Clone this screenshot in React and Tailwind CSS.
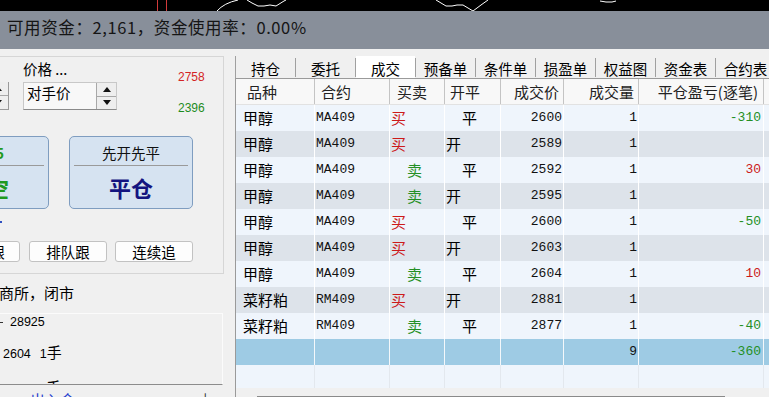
import React from "react";

const RED = "text-[#cc1a1a]";
const GREEN = "text-[#248f24]";

const rows = [
  ["甲醇", "MA409", "买", "平", "2600", "1", "-310"],
  ["甲醇", "MA409", "买", "开", "2589", "1", ""],
  ["甲醇", "MA409", "卖", "平", "2592", "1", "30"],
  ["甲醇", "MA409", "卖", "开", "2595", "1", ""],
  ["甲醇", "MA409", "买", "平", "2600", "1", "-50"],
  ["甲醇", "MA409", "买", "开", "2603", "1", ""],
  ["甲醇", "MA409", "卖", "平", "2604", "1", "10"],
  ["菜籽粕", "RM409", "买", "开", "2881", "1", ""],
  ["菜籽粕", "RM409", "卖", "平", "2877", "1", "-40"],
];

const tabs = ["持仓", "委托", "成交", "预备单", "条件单", "损盈单", "权益图", "资金表", "合约表"];

function TopChart() {
  return (
    <div className="h-[11px] bg-black">
      <svg width="769" height="11" className="block">
        <line x1="157.5" y1="0" x2="157.5" y2="11" stroke="#d23a3a" strokeWidth="1" />
        <line x1="166.5" y1="0" x2="166.5" y2="11" stroke="#d23a3a" strokeWidth="1" />
        <path d="M217 11 Q224 3 238 0" fill="none" stroke="#fff" strokeWidth="1" />
        <path d="M247 0 L252 3 L258 6 L264 6 L270 5 L276 6 L284 1 L286 0" fill="none" stroke="#fff" strokeWidth="1" />
        <path d="M436 0 L441 3 L446 6 L452 6 L457 5 L463 5 L468 8 L473 11 L481 5 L488 0" fill="none" stroke="#fff" strokeWidth="1" />
        <path d="M600 1 L606 2 L612 2 L616 1" fill="none" stroke="#fff" strokeWidth="1" />
      </svg>
    </div>
  );
}

function SpinButtons() {
  return (
    <div className="flex w-[20px] flex-col border-l border-[#a8a8a8]">
      <div className="flex flex-1 items-center justify-center border-b border-[#a8a8a8] bg-[#eeeeee]">
        <svg width="8" height="5"><path d="M0 5 L4 0 L8 5Z" fill="#111" /></svg>
      </div>
      <div className="flex flex-1 items-center justify-center bg-[#eeeeee]">
        <svg width="8" height="5"><path d="M0 0 L4 5 L8 0Z" fill="#111" /></svg>
      </div>
    </div>
  );
}

function BigBtn({ className, top, topCls, bottom, bottomCls }) {
  return (
    <div className={"flex h-[73px] w-[124px] shrink-0 flex-col rounded-[5px] border border-[#7f9dc0] bg-[#d6e3f1] " + className}>
      <div className={"flex h-[28px] items-center justify-center pt-[3px] text-[14.5px] leading-[18px] whitespace-nowrap " + topCls}>{top}</div>
      <div className="mx-[4px] h-px bg-[#9a9a9a]" />
      <div className={"flex flex-1 items-center justify-center text-[22px] font-bold leading-[26px] whitespace-nowrap " + bottomCls}>{bottom}</div>
    </div>
  );
}

function SmallBtn({ className, children }) {
  return (
    <div className={"flex h-[21px] w-[78px] shrink-0 items-center justify-center rounded-[3px] border border-[#c2c2c2] bg-[#fdfdfd] text-[14.5px] leading-[19px] whitespace-nowrap " + className}>
      {children}
    </div>
  );
}

function Left() {
  return (
    <div className="flex w-[235px] shrink-0 flex-col overflow-hidden">
      <div className="mt-[7px] flex h-[218px] w-[224px] shrink-0 flex-col border-t border-r border-b border-[#d6d6d6]">
        <div className="flex h-[56px] shrink-0 items-start">
          <div className="mt-[25px] flex h-[28px] w-[9px] shrink-0 justify-end overflow-hidden border-r border-b border-[#9a9a9a]">
            <div className="flex w-[20px] shrink-0 flex-col">
              <div className="flex flex-1 items-center justify-center border-b border-[#a8a8a8] bg-[#eeeeee]">
                <svg width="8" height="5"><path d="M0 5 L4 0 L8 5Z" fill="#111" /></svg>
              </div>
              <div className="flex flex-1 items-center justify-center bg-[#eeeeee]">
                <svg width="8" height="5"><path d="M0 0 L4 5 L8 0Z" fill="#111" /></svg>
              </div>
            </div>
          </div>
          <div className="ml-[14px] flex flex-col">
            <div className="mt-[2px] h-[20px] text-[14.5px] leading-[20px] whitespace-nowrap">价格 ...</div>
            <div className="mt-[3px] flex h-[28px] w-[94px] border border-[#c8c8c8] border-b-[#8a8a8a] bg-[#f8f8f8]">
              <div className="flex-1 pl-[3px] text-[14.5px] leading-[20px] whitespace-nowrap">对手价</div>
              <SpinButtons />
            </div>
          </div>
          <div className="ml-[61px] flex flex-col font-['Liberation_Sans',sans-serif] text-[12px] leading-[15px]">
            <div className="mt-[13px] text-[#d42424]">2758</div>
            <div className="mt-[16px] text-[#1e8c1e]">2396</div>
          </div>
        </div>
        <div className="mt-[23px] flex h-[73px] shrink-0">
          <BigBtn className="ml-[-75px]" top="2395" topCls="font-bold text-[#1f9a1f]" bottom="卖空" bottomCls="text-[#1f9a1f]" />
          <BigBtn className="ml-[20px]" top="先开先平" topCls="text-[#111]" bottom="平仓" bottomCls="text-[#141480]" />
        </div>
        <div className="mt-[12px] h-[2px] w-[2px] shrink-0 bg-[#3050c0]" />
        <div className="mt-[18px] flex h-[21px] shrink-0">
          <SmallBtn className="ml-[-58px] pl-[4px]">对价跟</SmallBtn>
          <SmallBtn className="ml-[9px]">排队跟</SmallBtn>
          <SmallBtn className="ml-[8px]">连续追</SmallBtn>
        </div>
      </div>
      <div className="mt-[9px] ml-[-16px] h-[20px] shrink-0 text-[15px] leading-[20px] whitespace-nowrap">郑商所，闭市</div>
      <div className="mt-[10px] flex h-[72px] w-[223px] shrink-0 flex-col overflow-hidden border-t border-r border-b border-t-[#fbfbfb] border-r-[#fbfbfb] border-b-[#8c8c8c]">
        <div className="mt-[1px] flex h-[15px] shrink-0 items-start font-['Liberation_Sans',sans-serif] text-[12.5px] leading-[15px]">
          <div className="mt-[7px] h-px w-[3px] bg-[#333]" />
          <span className="ml-[7px]">28925</span>
        </div>
        <div className="mt-[12px] flex h-[20px] shrink-0 items-baseline pl-[3px] text-[15px] leading-[20px] whitespace-nowrap">
          <span className="font-['Liberation_Sans',sans-serif] text-[12.5px]">2604</span>
          <span className="ml-[9px] font-['Liberation_Sans',sans-serif] text-[12.5px]">1</span>
          <span>手</span>
        </div>
        <div className="mt-[15px] flex h-[20px] shrink-0 pl-[46px] text-[15px] leading-[20px]">
          <span>手</span>
        </div>
      </div>
      <div className="mt-[5px] flex h-[20px] shrink-0 text-[15px] leading-[20px] whitespace-nowrap">
        <span className="ml-[30px] text-[#1f3fcf]">出入金</span>
        <span className="ml-[120px] text-[#333]">&gt;|</span>
      </div>
    </div>
  );
}

const colW = ["w-[79px]", "w-[75px]", "w-[55px]", "w-[56px]", "w-[63px]", "w-[75px]", "w-[125px]"];

function Right() {
  return (
    <div className="flex min-w-0 flex-1 flex-col overflow-hidden pt-[7px]">
      <div className="flex h-[22px] shrink-0 border-l border-[#a0a0a0]">
        {tabs.map((t, i) => (
          <React.Fragment key={t}>
            <div className={"flex w-[59px] shrink-0 items-center justify-center pt-[3px] text-[14.5px] leading-[18px] whitespace-nowrap " + (i === 2 ? "bg-white" : "")}>
              {t}
            </div>
            <div className="h-[19px] w-px shrink-0 self-center bg-[#a0a0a0]" />
          </React.Fragment>
        ))}
      </div>
      <div className="flex flex-1 flex-col border-t border-l border-[#9a9a9a] bg-[#eff5fc]">
        <div className="flex h-[26px] shrink-0 border-b border-[#e2e2e2] bg-[#f8f8f8] text-[15px] leading-[20px] text-[#222]">
          <div className={colW[0] + " flex shrink-0 items-center border-r border-[#c4c4c4] pl-[11px]"}>品种</div>
          <div className={colW[1] + " flex shrink-0 items-center border-r border-[#c4c4c4] pl-[6px]"}>合约</div>
          <div className={colW[2] + " flex shrink-0 items-center border-r border-[#c4c4c4] pl-[7px]"}>买卖</div>
          <div className={colW[3] + " flex shrink-0 items-center border-r border-[#c4c4c4] pl-[5px]"}>开平</div>
          <div className={colW[4] + " flex shrink-0 items-center justify-end border-r border-[#c4c4c4] pr-[4px]"}>成交价</div>
          <div className={colW[5] + " flex shrink-0 items-center justify-end border-r border-[#c4c4c4] pr-[4px]"}>成交量</div>
          <div className={colW[6] + " flex shrink-0 items-center justify-end border-r border-[#c4c4c4] pr-[5px] whitespace-nowrap"}>平仓盈亏(逐笔)</div>
          <div className="flex-1" />
        </div>
        {rows.map((r, i) => {
          const bg = i % 2 === 0 ? "bg-[#eff5fc]" : "bg-[#dde3ea]";
          const pnl = r[6];
          const pnlCls = pnl.startsWith("-") ? GREEN : RED;
          return (
            <div key={i} className={"flex h-[26px] shrink-0 " + bg}>
              <div className={colW[0] + " flex shrink-0 items-center border-r border-white pl-[7px] text-[15px] leading-[20px]"}>{r[0]}</div>
              <div className={colW[1] + " flex shrink-0 items-center border-r border-white pl-[1px] font-['Liberation_Mono',monospace] text-[13px] leading-[16px] text-[#111]"}>{r[1]}</div>
              <div className={colW[2] + " flex shrink-0 items-center border-r border-white text-[15px] leading-[20px] " + (r[2] === "买" ? "pl-[1px] " + RED : "pl-[17px] " + GREEN)}>{r[2]}</div>
              <div className={colW[3] + " flex shrink-0 items-center border-r border-white text-[15px] leading-[20px] " + (r[3] === "开" ? "pl-[1px]" : "pl-[17px]")}>{r[3]}</div>
              <div className={colW[4] + " flex shrink-0 items-center justify-end border-r border-white pr-[1px] font-['Liberation_Mono',monospace] text-[13px] leading-[16px] text-[#111]"}>{r[4]}</div>
              <div className={colW[5] + " flex shrink-0 items-center justify-end border-r border-white pr-[1px] font-['Liberation_Mono',monospace] text-[13px] leading-[16px] text-[#111]"}>{r[5]}</div>
              <div className={colW[6] + " flex shrink-0 items-center justify-end border-r border-white pr-[2px] font-['Liberation_Mono',monospace] text-[13px] leading-[16px] " + pnlCls}>{pnl}</div>
              <div className="flex-1" />
            </div>
          );
        })}
        <div className="flex h-[26px] shrink-0 bg-[#9ecbe4]">
          <div className={colW[0] + " shrink-0 border-r border-[#f4f8fb]"} />
          <div className={colW[1] + " shrink-0 border-r border-[#f4f8fb]"} />
          <div className={colW[2] + " shrink-0 border-r border-[#f4f8fb]"} />
          <div className={colW[3] + " shrink-0 border-r border-[#f4f8fb]"} />
          <div className={colW[4] + " shrink-0 border-r border-[#f4f8fb]"} />
          <div className={colW[5] + " flex shrink-0 items-center justify-end border-r border-[#f4f8fb] pr-[1px] font-['Liberation_Mono',monospace] text-[13px] leading-[16px] text-[#111]"}>9</div>
          <div className={colW[6] + " flex shrink-0 items-center justify-end border-r border-[#f4f8fb] pr-[2px] font-['Liberation_Mono',monospace] text-[13px] leading-[16px] " + GREEN}>-360</div>
          <div className="flex-1" />
        </div>
        <div className="flex h-[23px] shrink-0 bg-[#eff5fc]">
          {colW.map((w, i) => (
            <div key={i} className={w + " shrink-0 border-r border-[#e3e8ee]"} />
          ))}
        </div>
        <div className="flex h-[20px] shrink-0 bg-[#f0f0f0]">
          <div className="mt-[8px] ml-[21px] h-[12px] w-[468px] border-t border-[#8a8a8a] bg-[#cdcdcd]" />
        </div>
      </div>
    </div>
  );
}

export default function App() {
  return (
    <div className="h-[397px] w-[769px] overflow-hidden bg-[#f0f0f0] font-['Noto_Sans_CJK_SC',sans-serif] text-black">
      <TopChart />
      <div className="h-[38px] bg-[#888f9a] pt-[4px] pl-[7px] text-[16.5px] leading-[24px] tracking-[0.6px] whitespace-nowrap text-[#151515]">
        可用资金：2,161，资金使用率：0.00%
      </div>
      <div className="flex h-[348px]">
        <Left />
        <Right />
      </div>
    </div>
  );
}
